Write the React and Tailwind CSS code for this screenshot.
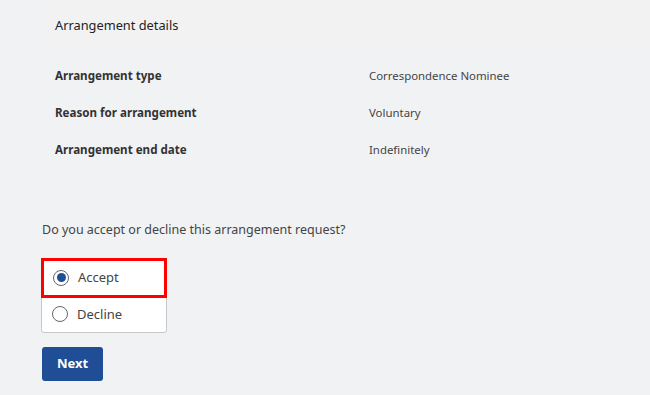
import React from "react";

const font = { fontFamily: '"Noto Sans", "Open Sans", sans-serif' };

function Row({ label, value }) {
  return (
    <div className="flex h-[37px] items-center">
      <div className="w-[314px] text-[11.6px] font-bold text-[#333]">{label}</div>
      <div className="text-[11.4px] text-[#444]">{value}</div>
    </div>
  );
}

export default function App() {
  return (
    <div className="w-[650px] h-[395px] bg-[#f1f2f4] overflow-hidden" style={font}>
      <div className="ml-[42px] h-[46px] bg-[#f2f2f2] flex items-center pl-[13px] pt-[5px] text-[12.8px] text-[#222]">
        Arrangement details
      </div>
      <div className="ml-[55px] mt-[11px]">
        <Row label="Arrangement type" value="Correspondence Nominee" />
        <Row label="Reason for arrangement" value="Voluntary" />
        <Row label="Arrangement end date" value="Indefinitely" />
      </div>
      <div className="ml-[42px] mt-[53px] text-[12.5px] text-[#444]">
        Do you accept or decline this arrangement request?
      </div>
      <div className="ml-[41px] mt-[18px] w-[126px] rounded-[3px] border border-[#c8c8c8] bg-white">
        <div className="h-[40px] border-[3px] border-[#ff0000] -m-px flex items-center pl-[9px] gap-[9px]">
          <span className="w-[16px] h-[16px] rounded-full border-[1.5px] border-[#666] flex items-center justify-center">
            <span className="w-[9px] h-[9px] rounded-full bg-[#1f4e96]" />
          </span>
          <span className="text-[13px] text-[#444]">Accept</span>
        </div>
        <div className="h-[35px] flex items-center pl-[10px] gap-[9px]">
          <span className="w-[16px] h-[16px] rounded-full border-[1.5px] border-[#666]" />
          <span className="text-[13px] text-[#444]">Decline</span>
        </div>
      </div>
      <button className="ml-[42px] mt-[14px] w-[61px] h-[34px] rounded-[3px] bg-[#1f4e96] text-white text-[13px] font-bold">
        Next
      </button>
    </div>
  );
}
